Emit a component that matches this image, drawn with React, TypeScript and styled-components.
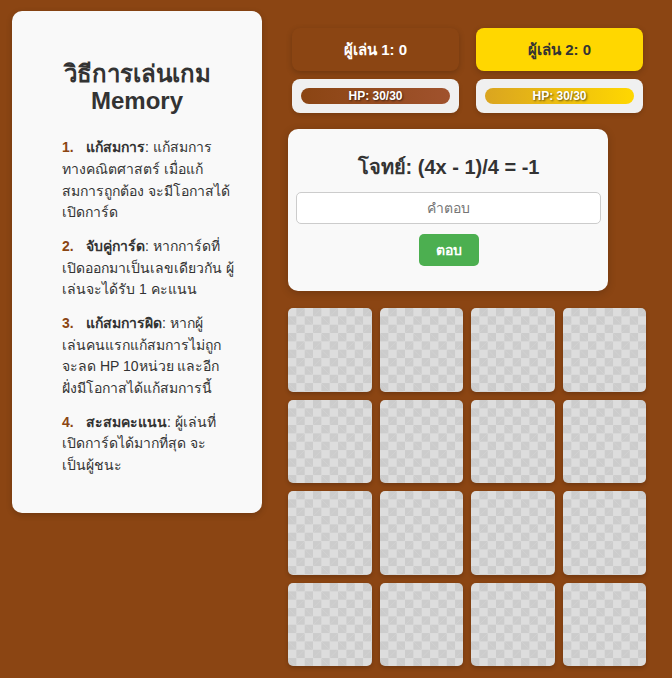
import React, { FC, Fragment } from 'react'
import styled, { createGlobalStyle } from 'styled-components'

const GlobalStyle = createGlobalStyle`
	body {
		margin: 0;
		background-color: #8b4513;
		font-family: Arial, 'Liberation Sans', sans-serif;
		color: #333;
	}
`

type TRule = {
	title: string
	lines: string[]
}

// lines are broken where the original layout breaks them
const rules: TRule[] = [
	{ title: 'แก้สมการ', lines: ['แก้สมการ', 'ทางคณิตศาสตร์ เมื่อแก้', 'สมการถูกต้อง จะมีโอกาสได้', 'เปิดการ์ด'] },
	{ title: 'จับคู่การ์ด', lines: ['หากการ์ดที่', 'เปิดออกมาเป็นเลขเดียวกัน ผู้', 'เล่นจะได้รับ 1 คะแนน'] },
	{
		title: 'แก้สมการผิด',
		lines: ['หากผู้', 'เล่นคนแรกแก้สมการไม่ถูก', 'จะลด HP 10หน่วย และอีก', 'ฝั่งมีโอกาสได้แก้สมการนี้'],
	},
	{ title: 'สะสมคะแนน', lines: ['ผู้เล่นที่', 'เปิดการ์ดได้มากที่สุด จะ', 'เป็นผู้ชนะ'] },
]

const players = [
	{ name: 'ผู้เล่น 1', score: 0, hp: 30, active: false },
	{ name: 'ผู้เล่น 2', score: 0, hp: 30, active: true },
]

const cards = Array.from({ length: 16 }, (_, i) => i)

const App: FC = () => {
	return (
		<>
			<GlobalStyle />
			<Page>
				<Rules>
					<Title>วิธีการเล่นเกม Memory</Title>
					<RuleList>
						{rules.map((rule, i) => (
							<RuleItem key={rule.title}>
								<Num>{i + 1}.</Num>
								<strong>{rule.title}</strong>:{' '}
								{rule.lines.map((line, j) => (
									<Fragment key={j}>
										{j > 0 && <br />}
										{line}
									</Fragment>
								))}
							</RuleItem>
						))}
					</RuleList>
				</Rules>
				<Game>
					<PlayerRow>
						{players.map(p => (
							<Player key={p.name} $active={p.active}>
								{p.name}: {p.score}
							</Player>
						))}
					</PlayerRow>
					<PlayerRow $gapTop={8}>
						{players.map(p => (
							<HpBox key={p.name}>
								<HpBar $active={p.active} style={{ width: `${(p.hp / 30) * 100}%` }}>
									HP: {p.hp}/30
								</HpBar>
							</HpBox>
						))}
					</PlayerRow>
					<Question>
						<QuestionText>โจทย์: (4x - 1)/4 = -1</QuestionText>
						<Answer placeholder='คำตอบ' />
						<SubmitButton>ตอบ</SubmitButton>
					</Question>
					<Board>
						{cards.map(c => (
							<Card key={c} />
						))}
					</Board>
				</Game>
			</Page>
		</>
	)
}

export default App

const Page = styled.div`
	display: flex;
	align-items: flex-start;
	gap: 26px;
	padding: 11px 26px 12px 12px;
`
const Rules = styled.div`
	width: 250px;
	box-sizing: border-box;
	padding: 30px 20px 24px;
	background-color: #f9f9f9;
	border-radius: 10px;
	box-shadow: 0 2px 6px rgba(0, 0, 0, 0.2);
`
const Title = styled.h2`
	margin: 18.5px 0 22.5px;
	font-size: 24px;
	line-height: 1.15;
	text-align: center;
	color: #333;
`
const RuleList = styled.ol`
	list-style: none;
	margin: 0;
	padding: 0 0 0 30px;
`
const RuleItem = styled.li`
	font-size: 14px;
	line-height: 1.55;
	margin-bottom: 12px;
	white-space: nowrap;
`
const Num = styled.span`
	display: inline-block;
	width: 24px;
	font-weight: bold;
	color: #8b4513;
`
const Game = styled.div`
	width: 358px;
	display: flex;
	flex-direction: column;
	padding-top: 17px;
`
const PlayerRow = styled.div<{ $gapTop?: number }>`
	display: grid;
	grid-template-columns: 167px 167px;
	gap: 17px;
	margin-left: 4px;
	margin-top: ${props => props.$gapTop || 0}px;
`
const Player = styled.div<{ $active: boolean }>`
	display: flex;
	align-items: center;
	justify-content: center;
	height: 43px;
	border-radius: 8px;
	font-size: 15px;
	font-weight: bold;
	background-color: ${props => (props.$active ? '#ffd700' : '#8b4513')};
	color: ${props => (props.$active ? '#333' : '#fff')};
	box-shadow: 0 2px 6px rgba(0, 0, 0, 0.2);
`
const HpBox = styled.div`
	height: 34px;
	box-sizing: border-box;
	padding: 9px;
	background-color: #f0f0f0;
	border-radius: 8px;
	box-shadow: 0 2px 4px rgba(0, 0, 0, 0.15);
`
const HpBar = styled.div<{ $active: boolean }>`
	height: 16px;
	border-radius: 8px;
	background: ${props =>
		props.$active
			? 'linear-gradient(to right, #daa520, #ffd700)'
			: 'linear-gradient(to right, #8b4513, #a0522d)'};
	color: #fff;
	font-size: 12px;
	font-weight: bold;
	line-height: 16px;
	text-align: center;
	text-shadow: 1px 1px 2px rgba(0, 0, 0, 0.6);
`
const Question = styled.div`
	width: 320px;
	box-sizing: border-box;
	margin-top: 16px;
	padding: 26px 7px 25px 8px;
	background-color: #f9f9f9;
	border-radius: 10px;
	box-shadow: 0 2px 8px rgba(0, 0, 0, 0.2);
	display: flex;
	flex-direction: column;
	align-items: center;
`
const QuestionText = styled.h3`
	margin: 0;
	font-size: 20px;
	line-height: 24px;
	color: #333;
`
const Answer = styled.input`
	width: 100%;
	height: 32px;
	box-sizing: border-box;
	margin-top: 13px;
	padding: 6px 10px;
	border: 1px solid #ccc;
	border-radius: 5px;
	background: #fff;
	font-family: inherit;
	font-size: 14px;
	text-align: center;
	outline: none;
`
const SubmitButton = styled.button`
	width: 60px;
	height: 32px;
	margin-top: 10px;
	border: none;
	border-radius: 5px;
	background-color: #4caf50;
	color: #fff;
	font-family: inherit;
	font-size: 14px;
	font-weight: bold;
	cursor: pointer;
`
const Board = styled.div`
	display: grid;
	grid-template-columns: repeat(4, 1fr);
	gap: 8px;
	margin-top: 17px;
`
const Card = styled.div`
	aspect-ratio: 1;
	border-radius: 5px;
	background-color: #ddd;
	background-image: linear-gradient(45deg, #ccc 25%, transparent 25%),
		linear-gradient(-45deg, #ccc 25%, transparent 25%),
		linear-gradient(45deg, transparent 75%, #ccc 75%),
		linear-gradient(-45deg, transparent 75%, #ccc 75%);
	background-size: 16.7px 16.7px;
	background-position: 0 0, 0 8.35px, 8.35px -8.35px, -8.35px 0;
	box-shadow: 0 2px 4px rgba(0, 0, 0, 0.2);
	cursor: pointer;
`
